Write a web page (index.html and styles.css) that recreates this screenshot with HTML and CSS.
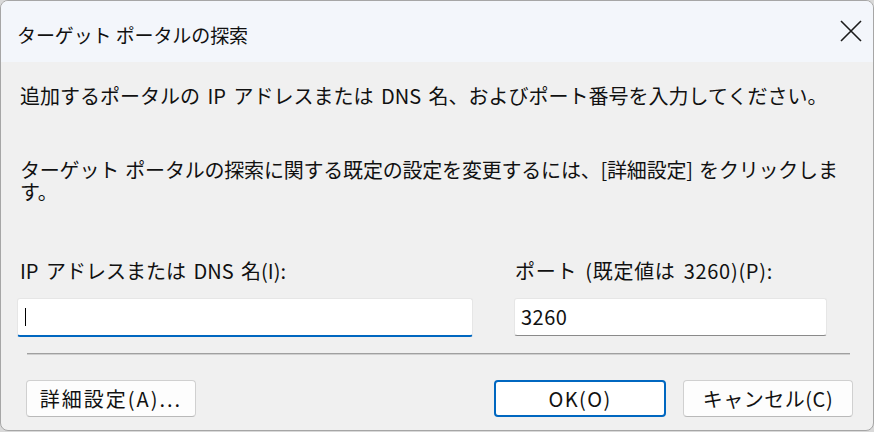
FILE: index.html
```html
<!DOCTYPE html>
<html>
<head>
    <title>ターゲット ポータルの探索</title>
    <link rel="stylesheet" href="styles.css">
</head>
<body>
    <div class="window">
        <div class="titlebar">
            <span class="title">ターゲット ポータルの探索</span>
            <svg class="close" width="22" height="22" viewBox="0 0 22 22">
                <path d="M1 1 L21 21 M21 1 L1 21" stroke="#1b1b1b" stroke-width="1.6" fill="none"/>
            </svg>
        </div>
        <div class="content">
            <p class="msg msg-first">追加するポータルの IP アドレスまたは DNS 名、およびポート番号を入力してください。</p>
            <p class="msg msg-second">ターゲット ポータルの探索に関する既定の設定を変更するには、[詳細設定] をクリックします。</p>
            <div class="fields">
                <div class="field field-host">
                    <label>IP アドレスまたは DNS 名(I):</label>
                    <div class="input focused"><span class="caret"></span></div>
                </div>
                <div class="field field-port">
                    <label>ポート (既定値は 3260)(P):</label>
                    <div class="input">3260</div>
                </div>
            </div>
            <div class="sep"></div>
            <div class="buttons">
                <button class="btn btn-advanced">詳細設定(A)...</button>
                <span class="spacer"></span>
                <button class="btn default">OK(O)</button>
                <button class="btn">キャンセル(C)</button>
            </div>
        </div>
    </div>
</body>
</html>
```

FILE: styles.css
```css
:root {
    --frame: #a6a6a6;
    --title-bg: #f3f6fb;
    --face: #f0f0f0;
    --ink: #111111;
    --accent: #0067c0;
}
html { background: #d9d9d9; }
body { margin: 0; font-family: "Noto Sans CJK JP", "Noto Sans", sans-serif; font-size: 20px; color: var(--ink); }
.window { width: 872px; height: 429px; border: 1px solid var(--frame); border-radius: 8px; overflow: hidden; background: var(--face); display: flex; flex-direction: column; }
.titlebar { height: 61px; background: var(--title-bg); display: flex; align-items: center; padding: 0 11px 0 16px; }
.title { flex: 1; font-size: 19px; letter-spacing: -0.1px; margin-top: 5px; }
.close { margin-top: -2px; }
.content { flex: 1; padding: 0 20px 0 16px; display: flex; flex-direction: column; }
.msg { margin: 0; padding-left: 3px; line-height: 22px; word-spacing: 2px; }
.msg-first { margin-top: 23px; word-spacing: 3px; }
.msg-second { margin-top: 52px; letter-spacing: -0.2px; }
.fields { display: flex; gap: 41px; margin-top: 57px; }
.field { display: flex; flex-direction: column; }
.field label { line-height: 22px; padding-left: 3px; word-spacing: 3px; }
.field-host { width: 456px; }
.field-port { width: 313px; }
.field-port label { padding-left: 1px; letter-spacing: 0.7px; }
.input { margin-top: 16px; height: 38px; box-sizing: border-box; background: #fff; border: 1px solid #e6e6e6; border-bottom: 1px solid #8a8a8a; border-radius: 3px; padding-left: 6px; display: flex; align-items: center; line-height: 1; letter-spacing: 0.5px; }
.input.focused { height: 39px; border-bottom: 2px solid var(--accent); }
.caret { display: block; width: 1px; height: 18px; background: #000; margin-left: 1px; }
.sep { margin: 16px 3px 0 10px; height: 1px; background: #a0a0a0; border-bottom: 1px solid #cfcfcf; }
.buttons { display: flex; gap: 17px; margin: 25px 0 0 9px; }
.spacer { flex: 1; }
.btn { width: 170px; height: 37px; font: inherit; color: var(--ink); background: #fdfdfd; border: 1px solid #d0d0d0; border-bottom-color: #b9b9b9; border-radius: 4px; padding: 0; line-height: 1; letter-spacing: 0.5px; }
.btn-advanced { letter-spacing: 2px; }
.btn.default { width: 172px; border: 2px solid var(--accent); background: #fff; letter-spacing: 1.4px; }
```
